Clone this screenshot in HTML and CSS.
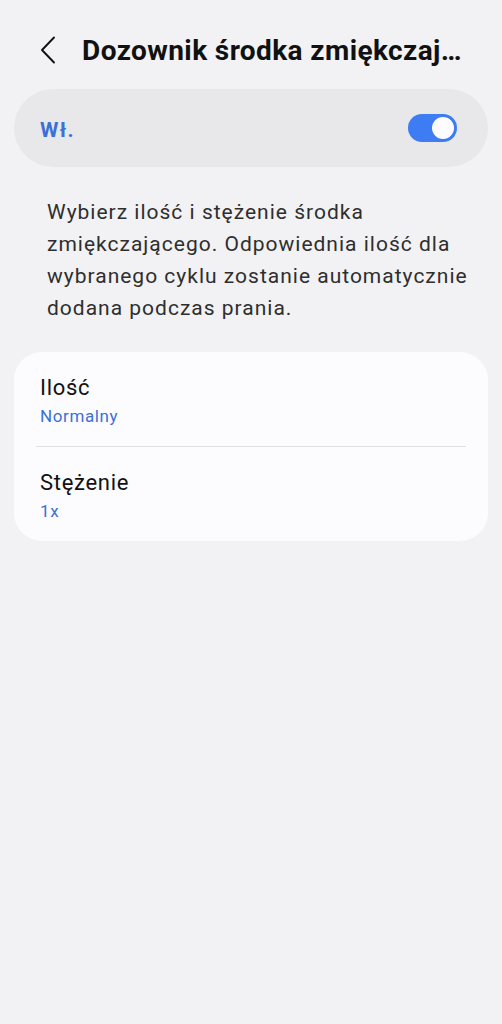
FILE: index.html
```html
<!DOCTYPE html>
<html lang="pl">
<head>
    <meta charset="UTF-8">
    <meta name="viewport" content="width=device-width, initial-scale=1.0">
    <title>Dozownik środka zmiękczającego</title>
    <link rel="stylesheet" href="styles.css">
</head>
<body>
    <header class="app-bar">
        <button class="back-btn" aria-label="Wstecz">
            <svg width="16" height="28" viewBox="0 0 16 28">
                <path d="M14 1.5 L2 14 L14 26.5" fill="none" stroke="#111" stroke-width="1.9" stroke-linecap="round" stroke-linejoin="round"/>
            </svg>
        </button>
        <h1 class="title">Dozownik środka zmiękczającego</h1>
    </header>

    <div class="master-switch">
        <span class="master-label">Wł.</span>
        <span class="toggle on"><span class="knob"></span></span>
    </div>

    <p class="description">
        Wybierz ilość i stężenie środka zmiękczającego. Odpowiednia ilość dla wybranego cyklu zostanie automatycznie dodana podczas prania.
    </p>

    <div class="settings-card">
        <div class="setting-row">
            <div class="setting-title">Ilość</div>
            <div class="setting-value">Normalny</div>
        </div>
        <div class="divider"></div>
        <div class="setting-row">
            <div class="setting-title">Stężenie</div>
            <div class="setting-value">1x</div>
        </div>
    </div>
</body>
</html>
```

FILE: styles.css
```css
body {
    margin: 0;
    font-family: Roboto, 'Noto Sans', sans-serif;
    background: #f2f2f4;
    color: #111;
}
.app-bar {
    display: flex;
    align-items: center;
    height: 60px;
    padding: 20px 30px 0 40px;
}
.back-btn {
    display: flex;
    align-items: center;
    justify-content: center;
    width: 18px;
    height: 28px;
    padding: 0;
    border: none;
    background: none;
    margin-right: 26px;
}
.title {
    margin: 0;
    font-size: 28px;
    font-weight: 700;
    letter-spacing: 0.4px;
    white-space: nowrap;
    overflow: hidden;
    text-overflow: ellipsis;
}
.master-switch {
    display: flex;
    align-items: center;
    justify-content: space-between;
    height: 78px;
    margin: 9px 14px 0;
    padding: 0 31px 0 26px;
    background: #e8e8ea;
    border-radius: 39px;
}
.master-label {
    font-size: 21px;
    font-weight: 700;
    letter-spacing: 1.4px;
    color: #3b70d6;
    padding-top: 4px;
}
.toggle {
    display: flex;
    align-items: center;
    width: 49px;
    height: 28px;
    padding: 3px;
    box-sizing: border-box;
    border-radius: 14px;
    background: #3d7cf2;
}
.toggle.on {
    justify-content: flex-end;
}
.knob {
    width: 22px;
    height: 22px;
    border-radius: 50%;
    background: #fdfdff;
}
.description {
    margin: 29px 0 0;
    padding: 0 20px 0 47px;
    font-size: 21px;
    line-height: 32px;
    letter-spacing: 1px;
    color: #2e2e2e;
}
.settings-card {
    margin: 28px 14px 0;
    background: #fcfcfe;
    border-radius: 28px;
}
.setting-row {
    display: flex;
    flex-direction: column;
    gap: 3px;
    padding: 22px 26px 19px;
}
.setting-title {
    font-size: 22px;
    line-height: 28px;
    letter-spacing: 0.7px;
    color: #111;
}
.setting-value {
    font-size: 17px;
    line-height: 22px;
    letter-spacing: 0.6px;
    color: #3b70d6;
}
.divider {
    height: 1px;
    margin: 0 22px;
    background: #dfdfe2;
}
```
